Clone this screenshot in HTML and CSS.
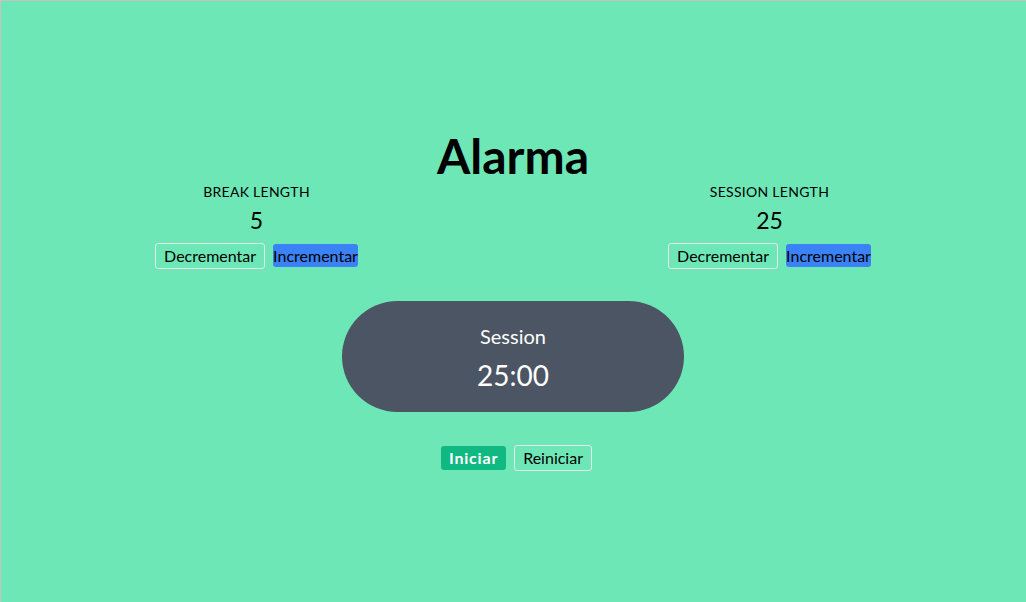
FILE: index.html
```html
<!DOCTYPE html>
<html lang="es">
<head>
<meta charset="utf-8">
<title>Alarma</title>
<link rel="stylesheet" href="styles.css">
</head>
<body>
<main class="app">
  <h1 class="title">Alarma</h1>
  <section class="settings">
    <div class="setting">
      <div class="label">BREAK LENGTH</div>
      <div class="value">5</div>
      <div class="controls">
        <button class="btn btn-outline">Decrementar</button>
        <button class="btn btn-blue">Incrementar</button>
      </div>
    </div>
    <div class="setting">
      <div class="label">SESSION LENGTH</div>
      <div class="value">25</div>
      <div class="controls">
        <button class="btn btn-outline">Decrementar</button>
        <button class="btn btn-blue">Incrementar</button>
      </div>
    </div>
  </section>
  <section class="timer">
    <div class="timer-label">Session</div>
    <div class="timer-time">25:00</div>
  </section>
  <div class="actions">
    <button class="btn btn-start">Iniciar</button>
    <button class="btn btn-outline">Reiniciar</button>
  </div>
</main>
</body>
</html>
```

FILE: styles.css
```css
* { box-sizing: border-box; }
html, body { margin: 0; padding: 0; }
body {
  font-family: Lato, "Noto Sans", sans-serif;
  background: #6ee7b7;
  color: #000;
  height: 602px;
  box-shadow: inset 1px 1px 0 #c4c4c4;
}
.app {
  height: 100%;
  display: flex;
  flex-direction: column;
  align-items: center;
  justify-content: center;
}
.title {
  margin: 0;
  font-size: 48px;
  line-height: 48px;
  font-weight: 700;
}
.settings {
  width: 100%;
  display: flex;
  justify-content: space-around;
  margin-top: 2px;
}
.setting {
  display: flex;
  flex-direction: column;
  align-items: center;
}
.label {
  font-size: 14px;
  line-height: 20px;
  letter-spacing: 0.02em;
}
.value {
  font-size: 23px;
  line-height: 32px;
  padding-top: 2px;
}
.controls {
  margin-top: 7px;
  display: flex;
  align-items: center;
  gap: 8px;
}
.btn {
  font-family: inherit;
  font-size: 16px;
  line-height: 24px;
  color: #000;
  margin: 0;
  padding: 0;
  border: 0;
  border-radius: 3px;
  background: transparent;
  cursor: pointer;
}
.btn-outline {
  border: 1px solid #e5e7eb;
  padding: 0 8px;
}
.btn-blue {
  background: #3b82f6;
  padding: 0;
  line-height: 23px;
}
.timer {
  margin-top: 32px;
  width: 342px;
  height: 111px;
  border-radius: 56px;
  background: #4b5563;
  color: #fff;
  display: flex;
  flex-direction: column;
  align-items: center;
  padding-top: 21px;
}
.timer-label {
  font-size: 20px;
  line-height: 28px;
}
.timer-time {
  margin-top: 7px;
  font-size: 28px;
  line-height: 36px;
}
.actions {
  margin-top: 33px;
  padding-left: 7px;
  display: flex;
  align-items: center;
  gap: 8px;
}
.btn-start {
  background: #10b981;
  color: #fff;
  font-weight: 700;
  letter-spacing: 0.05em;
  padding: 0 8px;
}
```
